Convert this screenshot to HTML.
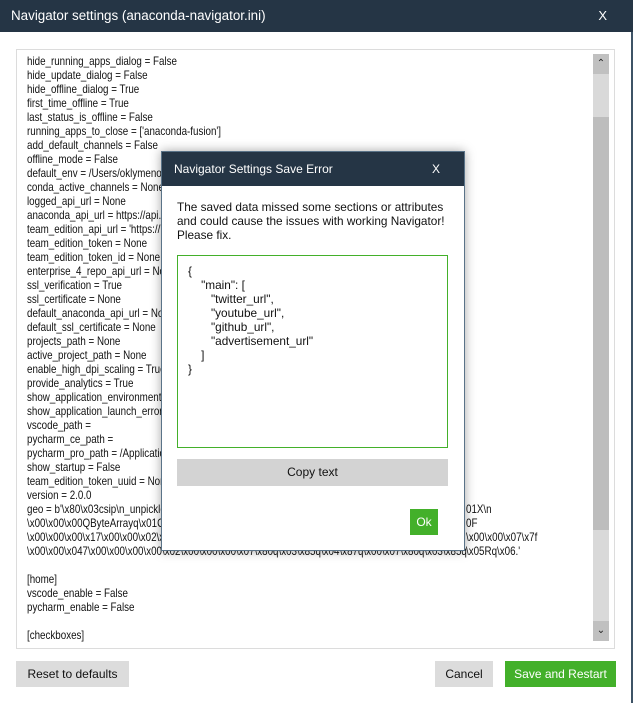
<!DOCTYPE html>
<html><head><meta charset="utf-8">
<style>
*{margin:0;padding:0;box-sizing:border-box}
body{width:633px;height:703px;background:#fff;font-family:"Liberation Sans","DejaVu Sans",sans-serif;position:relative;overflow:hidden;color:#111}
.title{position:absolute;left:0;top:0;width:633px;height:32px;background:#253545;color:#fff;font-size:13.4px;line-height:32px;padding-left:11px}
.title .x{position:absolute;right:26px;top:0;font-size:13px}
.rb{position:absolute;right:0;top:32px;width:2px;height:671px;background:#3e5366}
.ta{position:absolute;left:16px;top:49px;width:599px;height:600px;border:1px solid #dcdcdc;overflow:hidden}
.txt{position:absolute;left:10px;top:4px;font-size:11.8px;line-height:14px;white-space:pre;transform:scaleX(0.83);transform-origin:0 0}
.tail{position:absolute;left:449px;font-size:11.8px;line-height:14px;white-space:pre;transform:scaleX(0.83);transform-origin:0 0}
.sb{position:absolute;left:576px;top:4px;width:16px;height:587px;background:#d9d9d9}
.sb .up,.sb .dn{position:absolute;left:0;width:16px;height:20px;background:#c0c0c0;font-size:10px;text-align:center;line-height:20px;color:#222}
.sb .up{top:0}.sb .dn{bottom:0}
.sb .th{position:absolute;left:0;top:63px;width:16px;height:413px;background:#bdbdbd}
.btn{position:absolute;top:661px;height:26px;font-size:12px;line-height:26px;text-align:center}
.dlg{position:absolute;left:161px;top:151px;width:304px;height:400px;background:#fff;border:1px solid #5a7388;box-shadow:0 0 10px rgba(0,0,0,.35)}
.dh{height:34px;background:#253545;color:#fff;font-size:12px;line-height:34px;padding-left:12px;position:relative}
.dh .x{position:absolute;right:24px;top:0}
.msg{position:absolute;left:15px;top:48px;font-size:11.8px;line-height:14px;width:285px}
.code{position:absolute;left:15px;top:103px;width:271px;height:193px;border:1px solid #43b02a;font-size:11.8px;line-height:14px;white-space:pre;padding:8px 0 0 10px}
.copy{position:absolute;left:15px;top:307px;width:271px;height:27px;background:#d3d3d3;font-size:12px;line-height:27px;text-align:center}
.ok{position:absolute;left:248px;top:357px;width:28px;height:26px;background:#43b02a;color:#fff;font-size:12px;line-height:26px;text-align:center}
</style></head><body>
<div class="title">Navigator settings (anaconda-navigator.ini)<span class="x">X</span></div>
<div class="rb"></div>
<div class="ta">
<div class="txt">hide_running_apps_dialog = False
hide_update_dialog = False
hide_offline_dialog = True
first_time_offline = True
last_status_is_offline = False
running_apps_to_close = ['anaconda-fusion']
add_default_channels = False
offline_mode = False
default_env = /Users/oklymenok/anaconda3
conda_active_channels = None
logged_api_url = None
anaconda_api_url = https://api.anaconda.org
team_edition_api_url = 'https://'
team_edition_token = None
team_edition_token_id = None
enterprise_4_repo_api_url = None
ssl_verification = True
ssl_certificate = None
default_anaconda_api_url = None
default_ssl_certificate = None
projects_path = None
active_project_path = None
enable_high_dpi_scaling = True
provide_analytics = True
show_application_environments = True
show_application_launch_errors = True
vscode_path =
pycharm_ce_path =
pycharm_pro_path = /Applications
show_startup = False
team_edition_token_uuid = None
version = 2.0.0
geo = b'\x80\x03csip\n_unpickle_type
\x00\x00\x00QByteArrayq\x01C.\x01
\x00\x00\x00\x17\x00\x00\x02\x00\x00
\x00\x00\x047\x00\x00\x00\x00\x02\x00\x00\x00\x07\x80q\x03\x85q\x04\x87q\x00\x07\x80q\x03\x85q

[home]
vscode_enable = False
pycharm_enable = False

[checkboxes]</div>
<div class="tail" style="top:452px">01X\n</div>
<div class="tail" style="top:466px">0F</div>
<div class="tail" style="top:480px">\x00\x00\x07\x7f</div>
<div class="tail" style="top:494px">\x05Rq\x06.'</div>
<div class="sb"><div class="up">&#8963;</div><div class="th"></div><div class="dn">&#8964;</div></div>
</div>
<div class="btn" style="left:16px;width:113px;background:#dcdcdc">Reset to defaults</div>
<div class="btn" style="left:435px;width:58px;background:#dcdcdc">Cancel</div>
<div class="btn" style="left:505px;width:111px;background:#43b02a;color:#fff">Save and Restart</div>
<div class="dlg">
<div class="dh">Navigator Settings Save Error<span class="x">X</span></div>
<div class="msg">The saved data missed some sections or attributes and could cause the issues with working Navigator! Please fix.</div>
<div class="code">{
    "main": [
       "twitter_url",
       "youtube_url",
       "github_url",
       "advertisement_url"
    ]
}</div>
<div class="copy">Copy text</div>
<div class="ok">Ok</div>
</div>
</body></html>
